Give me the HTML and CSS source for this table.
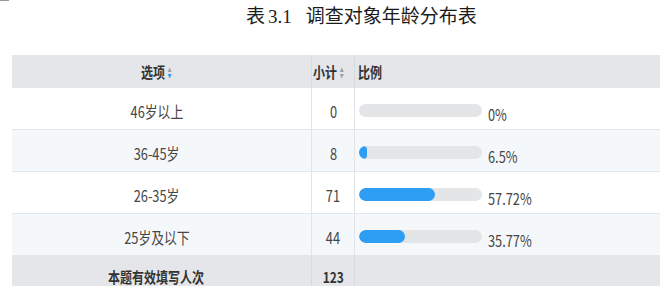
FILE: index.html
```html
<!DOCTYPE html>
<html lang="zh-CN">
<head>
<meta charset="utf-8">
<title>表 3.1 调查对象年龄分布表</title>
<link rel="stylesheet" href="styles.css">
</head>
<body>
<div class="corner"></div>
<h1 class="title"><span class="c1">表</span><span class="num">3.1</span><span>调查对象年龄分布表</span></h1>
<div class="wrap">
  <div class="row head">
    <div class="cell c-opt"><span class="t tc">选项<svg class="sort" viewBox="0 0 6 12" width="6" height="12"><path d="M3 0.5 5.6 5H0.4Z" fill="#9ea3a9"/><path d="M3 11.5 5.6 7H0.4Z" fill="#3a9cf2"/></svg></span></div>
    <div class="cell c-num hl"><span class="t tl">小计<svg class="sort" viewBox="0 0 6 12" width="6" height="12"><path d="M3 0.5 5.6 5H0.4Z" fill="#9ea3a9"/><path d="M3 11.5 5.6 7H0.4Z" fill="#9ea3a9"/></svg></span></div>
    <div class="cell c-bar"><span class="t tl">比例</span></div>
  </div>
  <div class="row">
    <div class="cell c-opt"><span class="t tc">46岁以上</span></div>
    <div class="cell c-num"><span class="t tc">0</span></div>
    <div class="cell c-bar"><span class="track"><span class="fill" style="width:0px"></span></span><span class="t tl pct">0%</span></div>
  </div>
  <div class="row alt">
    <div class="cell c-opt"><span class="t tc">36-45岁</span></div>
    <div class="cell c-num"><span class="t tc">8</span></div>
    <div class="cell c-bar"><span class="track"><span class="fill" style="width:8px"></span></span><span class="t tl pct">6.5%</span></div>
  </div>
  <div class="row">
    <div class="cell c-opt"><span class="t tc">26-35岁</span></div>
    <div class="cell c-num"><span class="t tc">71</span></div>
    <div class="cell c-bar"><span class="track"><span class="fill" style="width:76px"></span></span><span class="t tl pct">57.72%</span></div>
  </div>
  <div class="row alt">
    <div class="cell c-opt"><span class="t tc">25岁及以下</span></div>
    <div class="cell c-num"><span class="t tc">44</span></div>
    <div class="cell c-bar"><span class="track"><span class="fill" style="width:46px"></span></span><span class="t tl pct">35.77%</span></div>
  </div>
  <div class="row foot">
    <div class="cell c-opt"><span class="t tc">本题有效填写人次</span></div>
    <div class="cell c-num"><span class="t tc">123</span></div>
    <div class="cell c-bar"></div>
  </div>
</div>
</body>
</html>
```
FILE: styles.css
```css
body {
  margin: 0;
  background: #fff;
  font-family: "Noto Sans CJK SC", "Noto Sans", sans-serif;
}
.corner {
  position: absolute;
  left: 0;
  top: 0;
  width: 9px;
  height: 1px;
  background: #9a9a9a;
}
.title {
  margin: 0;
  padding-left: 246px;
  height: 30px;
  line-height: 30px;
  font-size: 19px;
  font-weight: 400;
  color: #1c1c1c;
  white-space: nowrap;
}
.title .c1 { margin-right: 3px; }
.title .num {
  font-family: "Liberation Serif", serif;
  margin-right: 14px;
}
.wrap {
  margin: 25px 0 0 12px;
  width: 648px;
}
.row {
  display: grid;
  grid-template-columns: 300px 43px 1fr;
  height: 42px;
  border-bottom: 1px solid #e3e6ea;
  box-sizing: border-box;
  background: #fff;
  color: #454545;
  font-size: 16px;
}
.row.alt { background: #f5f8fb; }
.row.head {
  height: 33px;
  border-bottom: none;
  background: #e4e6ea;
  color: #333;
  font-size: 15px;
  font-weight: 700;
}
.row.foot {
  height: 30px;
  background: #e4e6ea;
  color: #333;
  font-size: 15px;
  font-weight: 700;
  line-height: 14px;
  border-bottom: none;
}
.cell {
  display: flex;
  align-items: center;
  box-sizing: border-box;
  padding-top: 4px;
  white-space: nowrap;
}
.head .cell { padding-top: 0; }
.foot .cell { padding-top: 12px; }
.c-opt {
  justify-content: center;
  padding-right: 10px;
  border-right: 1px solid #e0e3e7;
}
.c-num {
  justify-content: center;
  border-right: 1px solid #e0e3e7;
}
.head .c-opt, .head .c-num, .foot .c-opt, .foot .c-num { border-right-color: #d6d9dd; }
.head .c-num { justify-content: flex-start; padding-left: 1px; }
.c-bar { padding-left: 4px; }
.head .c-bar { padding-left: 3px; }
.t {
  display: inline-block;
  transform: scaleX(0.8);
}
.tc { transform-origin: center center; }
.tl { transform-origin: left center; }
.sort {
  margin-left: 3px;
  vertical-align: -1px;
}
.track {
  display: block;
  width: 123px;
  height: 13px;
  border-radius: 7px;
  background: #e4e5e7;
  overflow: hidden;
  flex: none;
}
.fill {
  display: block;
  height: 100%;
  border-radius: 7px;
  background: #2e9ef4;
}
.pct {
  margin-left: 6px;
  padding-top: 7px;
}
```
